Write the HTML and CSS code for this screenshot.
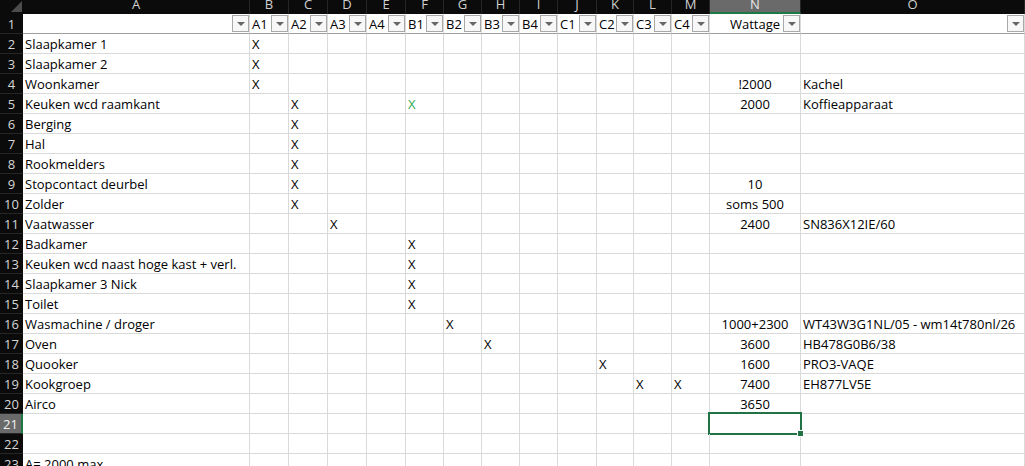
FILE: index.html
```html
<!DOCTYPE html>
<html lang="nl">
<head>
<meta charset="utf-8">
<title>Groepenkast</title>
<link rel="stylesheet" href="styles.css">
</head>
<body>
<div class="sheet">
  <!-- column headers -->
  <div class="corner"></div>
  <div class="ch">A</div><div class="ch">B</div><div class="ch">C</div><div class="ch">D</div><div class="ch">E</div><div class="ch">F</div><div class="ch">G</div><div class="ch">H</div><div class="ch">I</div><div class="ch">J</div><div class="ch">K</div><div class="ch">L</div><div class="ch">M</div><div class="ch ch-sel">N</div><div class="ch">O</div>

  <!-- row 1: filter headers -->
  <div class="rh">1</div>
  <div class="c f"><span class="fb"></span></div>
  <div class="c f">A1<span class="fb"></span></div>
  <div class="c f">A2<span class="fb"></span></div>
  <div class="c f">A3<span class="fb"></span></div>
  <div class="c f">A4<span class="fb"></span></div>
  <div class="c f">B1<span class="fb"></span></div>
  <div class="c f">B2<span class="fb"></span></div>
  <div class="c f">B3<span class="fb"></span></div>
  <div class="c f">B4<span class="fb"></span></div>
  <div class="c f">C1<span class="fb"></span></div>
  <div class="c f">C2<span class="fb"></span></div>
  <div class="c f">C3<span class="fb"></span></div>
  <div class="c f">C4<span class="fb"></span></div>
  <div class="c f mid">Wattage<span class="fb"></span></div>
  <div class="c f"><span class="fb"></span></div>

  <div class="rh">2</div>
  <div class="c">Slaapkamer 1</div><div class="c">X</div><div class="c"></div><div class="c"></div><div class="c"></div><div class="c"></div><div class="c"></div><div class="c"></div><div class="c"></div><div class="c"></div><div class="c"></div><div class="c"></div><div class="c"></div><div class="c mid"></div><div class="c"></div>

  <div class="rh">3</div>
  <div class="c">Slaapkamer 2</div><div class="c">X</div><div class="c"></div><div class="c"></div><div class="c"></div><div class="c"></div><div class="c"></div><div class="c"></div><div class="c"></div><div class="c"></div><div class="c"></div><div class="c"></div><div class="c"></div><div class="c mid"></div><div class="c"></div>

  <div class="rh">4</div>
  <div class="c">Woonkamer</div><div class="c">X</div><div class="c"></div><div class="c"></div><div class="c"></div><div class="c"></div><div class="c"></div><div class="c"></div><div class="c"></div><div class="c"></div><div class="c"></div><div class="c"></div><div class="c"></div><div class="c mid">!2000</div><div class="c">Kachel</div>

  <div class="rh">5</div>
  <div class="c">Keuken wcd raamkant</div><div class="c"></div><div class="c">X</div><div class="c"></div><div class="c"></div><div class="c green">X</div><div class="c"></div><div class="c"></div><div class="c"></div><div class="c"></div><div class="c"></div><div class="c"></div><div class="c"></div><div class="c mid">2000</div><div class="c">Koffieapparaat</div>

  <div class="rh">6</div>
  <div class="c">Berging</div><div class="c"></div><div class="c">X</div><div class="c"></div><div class="c"></div><div class="c"></div><div class="c"></div><div class="c"></div><div class="c"></div><div class="c"></div><div class="c"></div><div class="c"></div><div class="c"></div><div class="c mid"></div><div class="c"></div>

  <div class="rh">7</div>
  <div class="c">Hal</div><div class="c"></div><div class="c">X</div><div class="c"></div><div class="c"></div><div class="c"></div><div class="c"></div><div class="c"></div><div class="c"></div><div class="c"></div><div class="c"></div><div class="c"></div><div class="c"></div><div class="c mid"></div><div class="c"></div>

  <div class="rh">8</div>
  <div class="c">Rookmelders</div><div class="c"></div><div class="c">X</div><div class="c"></div><div class="c"></div><div class="c"></div><div class="c"></div><div class="c"></div><div class="c"></div><div class="c"></div><div class="c"></div><div class="c"></div><div class="c"></div><div class="c mid"></div><div class="c"></div>

  <div class="rh">9</div>
  <div class="c">Stopcontact deurbel</div><div class="c"></div><div class="c">X</div><div class="c"></div><div class="c"></div><div class="c"></div><div class="c"></div><div class="c"></div><div class="c"></div><div class="c"></div><div class="c"></div><div class="c"></div><div class="c"></div><div class="c mid">10</div><div class="c"></div>

  <div class="rh">10</div>
  <div class="c">Zolder</div><div class="c"></div><div class="c">X</div><div class="c"></div><div class="c"></div><div class="c"></div><div class="c"></div><div class="c"></div><div class="c"></div><div class="c"></div><div class="c"></div><div class="c"></div><div class="c"></div><div class="c mid">soms 500</div><div class="c"></div>

  <div class="rh">11</div>
  <div class="c">Vaatwasser</div><div class="c"></div><div class="c"></div><div class="c">X</div><div class="c"></div><div class="c"></div><div class="c"></div><div class="c"></div><div class="c"></div><div class="c"></div><div class="c"></div><div class="c"></div><div class="c"></div><div class="c mid">2400</div><div class="c">SN836X12IE/60</div>

  <div class="rh">12</div>
  <div class="c">Badkamer</div><div class="c"></div><div class="c"></div><div class="c"></div><div class="c"></div><div class="c">X</div><div class="c"></div><div class="c"></div><div class="c"></div><div class="c"></div><div class="c"></div><div class="c"></div><div class="c"></div><div class="c mid"></div><div class="c"></div>

  <div class="rh">13</div>
  <div class="c">Keuken wcd naast hoge kast + verl.</div><div class="c"></div><div class="c"></div><div class="c"></div><div class="c"></div><div class="c">X</div><div class="c"></div><div class="c"></div><div class="c"></div><div class="c"></div><div class="c"></div><div class="c"></div><div class="c"></div><div class="c mid"></div><div class="c"></div>

  <div class="rh">14</div>
  <div class="c">Slaapkamer 3 Nick</div><div class="c"></div><div class="c"></div><div class="c"></div><div class="c"></div><div class="c">X</div><div class="c"></div><div class="c"></div><div class="c"></div><div class="c"></div><div class="c"></div><div class="c"></div><div class="c"></div><div class="c mid"></div><div class="c"></div>

  <div class="rh">15</div>
  <div class="c">Toilet</div><div class="c"></div><div class="c"></div><div class="c"></div><div class="c"></div><div class="c">X</div><div class="c"></div><div class="c"></div><div class="c"></div><div class="c"></div><div class="c"></div><div class="c"></div><div class="c"></div><div class="c mid"></div><div class="c"></div>

  <div class="rh">16</div>
  <div class="c">Wasmachine / droger</div><div class="c"></div><div class="c"></div><div class="c"></div><div class="c"></div><div class="c"></div><div class="c">X</div><div class="c"></div><div class="c"></div><div class="c"></div><div class="c"></div><div class="c"></div><div class="c"></div><div class="c mid">1000+2300</div><div class="c">WT43W3G1NL/05 - wm14t780nl/26</div>

  <div class="rh">17</div>
  <div class="c">Oven</div><div class="c"></div><div class="c"></div><div class="c"></div><div class="c"></div><div class="c"></div><div class="c"></div><div class="c">X</div><div class="c"></div><div class="c"></div><div class="c"></div><div class="c"></div><div class="c"></div><div class="c mid">3600</div><div class="c">HB478G0B6/38</div>

  <div class="rh">18</div>
  <div class="c">Quooker</div><div class="c"></div><div class="c"></div><div class="c"></div><div class="c"></div><div class="c"></div><div class="c"></div><div class="c"></div><div class="c"></div><div class="c"></div><div class="c">X</div><div class="c"></div><div class="c"></div><div class="c mid">1600</div><div class="c">PRO3-VAQE</div>

  <div class="rh">19</div>
  <div class="c">Kookgroep</div><div class="c"></div><div class="c"></div><div class="c"></div><div class="c"></div><div class="c"></div><div class="c"></div><div class="c"></div><div class="c"></div><div class="c"></div><div class="c"></div><div class="c">X</div><div class="c">X</div><div class="c mid">7400</div><div class="c">EH877LV5E</div>

  <div class="rh">20</div>
  <div class="c">Airco</div><div class="c"></div><div class="c"></div><div class="c"></div><div class="c"></div><div class="c"></div><div class="c"></div><div class="c"></div><div class="c"></div><div class="c"></div><div class="c"></div><div class="c"></div><div class="c"></div><div class="c mid">3650</div><div class="c"></div>

  <div class="rh rh-sel">21</div>
  <div class="c"></div><div class="c"></div><div class="c"></div><div class="c"></div><div class="c"></div><div class="c"></div><div class="c"></div><div class="c"></div><div class="c"></div><div class="c"></div><div class="c"></div><div class="c"></div><div class="c"></div><div class="c mid active"></div><div class="c"></div>

  <div class="rh">22</div>
  <div class="c"></div><div class="c"></div><div class="c"></div><div class="c"></div><div class="c"></div><div class="c"></div><div class="c"></div><div class="c"></div><div class="c"></div><div class="c"></div><div class="c"></div><div class="c"></div><div class="c"></div><div class="c mid"></div><div class="c"></div>

  <div class="rh">23</div>
  <div class="c">A= 2000 max</div><div class="c"></div><div class="c"></div><div class="c"></div><div class="c"></div><div class="c"></div><div class="c"></div><div class="c"></div><div class="c"></div><div class="c"></div><div class="c"></div><div class="c"></div><div class="c"></div><div class="c mid"></div><div class="c"></div>
</div>
</body>
</html>
```

FILE: styles.css
```css
html, body {
  margin: 0;
  padding: 0;
  background: #ffffff;
  overflow: hidden;
}

.sheet {
  display: grid;
  grid-template-columns: 23px 227px 39px 39px 39px 39px 38px 38px 38px 38px 39px 37px 38px 38px 91px 224px;
  grid-template-rows: 14px;
  grid-auto-rows: 20px;
  font-family: "Open Sans", "Noto Sans", sans-serif;
  font-size: 13px;
  color: #000000;
}

/* headers */
.corner {
  background: #0b0b0b;
  position: relative;
}
.corner::after {
  content: "";
  position: absolute;
  right: 1px;
  bottom: 2px;
  width: 0;
  height: 0;
  border-left: 11px solid transparent;
  border-bottom: 11px solid #4c4c4c;
}

.ch {
  background: #0b0b0b;
  color: #cfcfcf;
  text-align: center;
  line-height: 9px;
  overflow: hidden;
  border-right: 1px solid #262626;
  box-sizing: border-box;
}
.ch-sel {
  background: #6a6a6a;
  color: #e8e8e8;
  border-bottom: 2px solid #1e7a45;
}

.rh {
  background: #0b0b0b;
  color: #d6d6d6;
  text-align: center;
  line-height: 18px;
  padding-top: 1px;
  box-sizing: border-box;
  border-bottom: 1px solid #262626;
}
.rh-sel {
  background: #6a6a6a;
  color: #f0f0f0;
  border-right: 2px solid #1e7a45;
}

/* cells */
.c {
  box-sizing: border-box;
  border-right: 1px solid #d9d9d9;
  border-bottom: 1px solid #d9d9d9;
  padding: 1px 2px 0 2px;
  line-height: 18px;
  white-space: nowrap;
  overflow: visible;
  position: relative;
}
.mid {
  text-align: center;
  padding-left: 0;
  padding-right: 0;
}
.green {
  color: #2fae4f;
}

/* autofilter header row */
.f {
  border-bottom-color: #9d9d9d;
}
.fb {
  position: absolute;
  right: 0;
  bottom: 1px;
  width: 17px;
  height: 17px;
  box-sizing: border-box;
  border: 1px solid #a9a9a9;
  background: #f7f7f7;
  display: flex;
  align-items: center;
  justify-content: center;
}
.fb::before {
  content: "";
  width: 0;
  height: 0;
  border-left: 4px solid transparent;
  border-right: 4px solid transparent;
  border-top: 4px solid #666666;
  margin-top: 1px;
}

/* active cell */
.active::after {
  content: "";
  position: absolute;
  left: -2px;
  top: -2px;
  right: -2px;
  bottom: -2px;
  border: 2px solid #217346;
}
.active::before {
  content: "";
  position: absolute;
  right: -4px;
  bottom: -4px;
  width: 5px;
  height: 5px;
  background: #217346;
  border: 1px solid #ffffff;
  z-index: 1;
}
```
